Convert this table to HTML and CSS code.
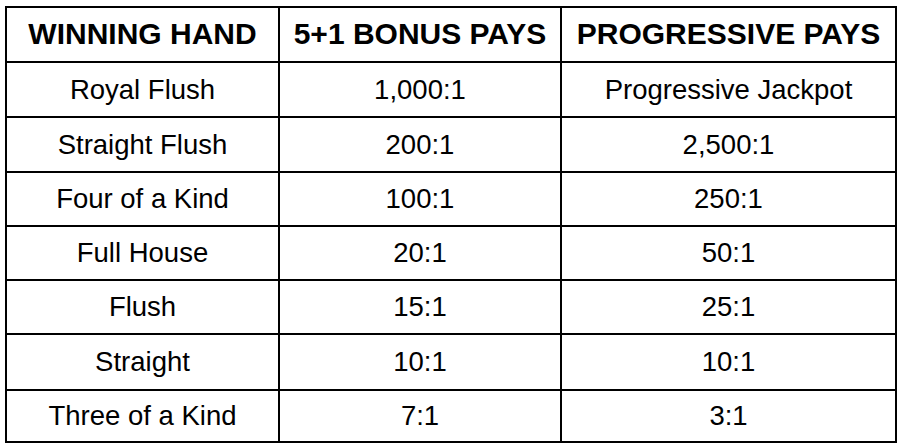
FILE: index.html
```html
<!DOCTYPE html>
<html>
<head>
<meta charset="utf-8">
<link rel="stylesheet" href="styles.css">
</head>
<body>
<table class="pays">
  <colgroup>
    <col class="c1"><col class="c2"><col class="c3">
  </colgroup>
  <thead>
    <tr class="r-head"><th>WINNING HAND</th><th>5+1 BONUS PAYS</th><th>PROGRESSIVE PAYS</th></tr>
  </thead>
  <tbody>
    <tr class="r55"><td>Royal Flush</td><td>1,000:1</td><td>Progressive Jackpot</td></tr>
    <tr class="r55"><td>Straight Flush</td><td>200:1</td><td>2,500:1</td></tr>
    <tr class="r54"><td>Four of a Kind</td><td>100:1</td><td>250:1</td></tr>
    <tr class="r54"><td>Full House</td><td>20:1</td><td>50:1</td></tr>
    <tr class="r54"><td>Flush</td><td>15:1</td><td>25:1</td></tr>
    <tr class="r56"><td>Straight</td><td>10:1</td><td>10:1</td></tr>
    <tr class="r52"><td>Three of a Kind</td><td>7:1</td><td>3:1</td></tr>
  </tbody>
</table>
</body>
</html>
```
FILE: styles.css
```css
html, body {
  margin: 0;
  padding: 0;
  background: #fff;
}
body {
  padding: 6px 0 0 5px;
  font-family: "Liberation Sans", Arial, sans-serif;
  color: #000;
}
.pays {
  border-collapse: collapse;
  table-layout: fixed;
  width: 892px;
}
.c1 { width: 273px; }
.c2 { width: 282px; }
.c3 { width: 335px; }
.pays th, .pays td {
  border: 2px solid #000;
  text-align: center;
  vertical-align: middle;
  padding: 0;
  line-height: 1.15;
}
.pays th {
  font-weight: bold;
  font-size: 30px;
}
.pays td {
  font-size: 27.5px;
}
.r-head { height: 55px; }
.r55 { height: 55px; }
.r54 { height: 54px; }
.r56 { height: 56px; }
.r52 { height: 52px; }
```
